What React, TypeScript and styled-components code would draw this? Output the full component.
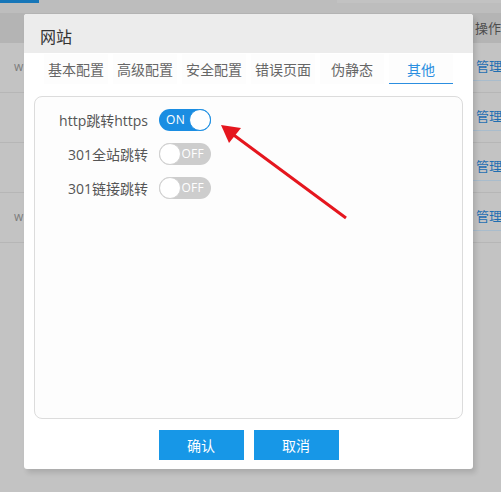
import React, { useState } from 'react'
import styled, { createGlobalStyle } from 'styled-components'

const GlobalStyle = createGlobalStyle`
  html, body {
    margin: 0;
    padding: 0;
    background: #c3c3c3;
  }
  body {
    font-family: 'Open Sans', 'Noto Sans CJK SC', sans-serif;
  }
`

const Screen = styled.div`
  position: relative;
  width: 501px;
  height: 492px;
  overflow: hidden;
  background: #c3c3c3;
  font-family: 'Open Sans', 'Noto Sans CJK SC', sans-serif;
`

// --- page behind the mask ---
const TopStrip = styled.div`
  height: 13px;
  background: #bdbdbd;
  display: flex;
  align-items: flex-start;
`
const TopAccent = styled.div`
  width: 39px;
  height: 3px;
  background: #1676b8;
`
const TopRight = styled.div`
  margin-left: auto;
  width: 164px;
  height: 3px;
  background: #c2c2c2;
`
const TableHead = styled.div`
  height: 30px;
  background: #b4b4b4;
  display: flex;
  align-items: center;
  justify-content: flex-end;
  color: #4d4d4d;
  font-size: 13px;
`
const HeadCell = styled.div`
  width: 26px;
  overflow: hidden;
  white-space: nowrap;
  margin-top: -2px;
`
const TableRow = styled.div`
  height: 49px;
  border-bottom: 1px solid #b6b6b6;
  display: flex;
  align-items: center;
  justify-content: space-between;
`
const RowText = styled.span`
  margin-left: 14px;
  color: #7d7d7d;
  font-size: 12px;
  margin-top: -2px;
`
const ManageCell = styled.div`
  align-self: flex-start;
  width: 28px;
  height: 38px;
  display: flex;
  align-items: center;
  box-sizing: border-box;
  padding: 8px 0 0 3px;
  border-bottom: 1px solid #a9bccc;
  color: #1f6fb2;
  font-size: 13px;
  white-space: nowrap;
  overflow: hidden;
`

// --- dialog ---
const Dialog = styled.div`
  position: absolute;
  left: 24px;
  top: 14px;
  width: 449px;
  height: 455px;
  background: #fff;
  border-radius: 3px;
  box-shadow: 3px 4px 5px rgba(0, 0, 0, 0.12);
  display: flex;
  flex-direction: column;
  box-sizing: border-box;
`
const DialogHeader = styled.div`
  height: 39px;
  flex-shrink: 0;
  background: #ececec;
  border-radius: 3px 3px 0 0;
  display: flex;
  align-items: center;
  box-sizing: border-box;
  padding: 4px 0 0 16px;
  font-size: 16px;
  color: #333;
`
const TabBar = styled.div`
  display: flex;
  gap: 5px;
  padding: 1px 0 0 20px;
  height: 31px;
  flex-shrink: 0;
`
const Tab = styled.div<{ $active?: boolean }>`
  width: 64px;
  height: 29px;
  display: flex;
  align-items: center;
  justify-content: center;
  font-size: 14px;
  background: #fdfdfd;
  color: ${({ $active }) => ($active ? '#2b8ee0' : '#666')};
  border-bottom: 1px solid ${({ $active }) => ($active ? '#2b8ee0' : 'transparent')};
  cursor: pointer;
`
const Panel = styled.div`
  margin: 11px 10px 0 10px;
  height: 323px;
  box-sizing: border-box;
  border: 1px solid #dcdcdc;
  border-radius: 8px;
  background: #fdfdfd;
  padding-top: 6px;
  display: flex;
  flex-direction: column;
`
const FormRow = styled.div`
  height: 34px;
  display: flex;
  align-items: center;
  gap: 11px;
`
const Label = styled.div`
  width: 113px;
  text-align: right;
  font-size: 14px;
  color: #555;
  white-space: nowrap;
`
const Switch = styled.div<{ $on: boolean }>`
  position: relative;
  width: 52px;
  height: 22px;
  border-radius: 11px;
  background: ${({ $on }) => ($on ? '#1a8de2' : '#cdcdcd')};
  box-sizing: border-box;
  cursor: pointer;
  display: flex;
  align-items: center;
  justify-content: ${({ $on }) => ($on ? 'flex-start' : 'flex-end')};
  padding: ${({ $on }) => ($on ? '0 0 0 7px' : '0 7px 0 0')};
`
const SwitchText = styled.span`
  color: #fff;
  font-size: 12px;
  letter-spacing: 0.3px;
  line-height: 1;
`
const Knob = styled.span<{ $on: boolean }>`
  position: absolute;
  top: 0;
  ${({ $on }) => ($on ? 'right: 0;' : 'left: 0;')}
  width: 22px;
  height: 22px;
  border-radius: 50%;
  background: #fff;
  box-sizing: border-box;
  border: 1px solid ${({ $on }) => ($on ? '#1a8de2' : '#d0d0d0')};
`
const Footer = styled.div`
  display: flex;
  justify-content: center;
  gap: 10px;
  margin-top: 11px;
`
const Button = styled.button`
  width: 85px;
  height: 30px;
  border: none;
  border-radius: 0;
  background: #1797e7;
  color: #fff;
  font-family: 'Open Sans', 'Noto Sans CJK SC', sans-serif;
  font-size: 14px;
  cursor: pointer;
  padding: 0;
`
const ArrowLayer = styled.svg`
  position: absolute;
  left: 0;
  top: 0;
  pointer-events: none;
`

const tabs = ['基本配置', '高级配置', '安全配置', '错误页面', '伪静态', '其他']

function Toggle({ on, onClick }: { on: boolean; onClick: () => void }) {
  return (
    <Switch $on={on} onClick={onClick}>
      <SwitchText>{on ? 'ON' : 'OFF'}</SwitchText>
      <Knob $on={on} />
    </Switch>
  )
}

export default function App() {
  const [active, setActive] = useState(5)
  const [opts, setOpts] = useState([true, false, false])
  const labels = ['http跳转https', '301全站跳转', '301链接跳转']

  const flip = (i: number) => setOpts(opts.map((v, j) => (j === i ? !v : v)))

  return (
    <Screen>
      <GlobalStyle />
      <TopStrip>
        <TopAccent />
        <TopRight />
      </TopStrip>
      <TableHead>
        <HeadCell>操作</HeadCell>
      </TableHead>
      {[0, 1, 2, 3].map((i) => (
        <TableRow key={i}>
          <RowText>{i === 0 || i === 3 ? 'w' : ''}</RowText>
          <ManageCell>管理</ManageCell>
        </TableRow>
      ))}

      <Dialog>
        <DialogHeader>网站</DialogHeader>
        <TabBar>
          {tabs.map((name, i) => (
            <Tab key={name} $active={i === active} onClick={() => setActive(i)}>
              {name}
            </Tab>
          ))}
        </TabBar>
        <Panel>
          {labels.map((l, i) => (
            <FormRow key={l}>
              <Label>{l}</Label>
              <Toggle on={opts[i]} onClick={() => flip(i)} />
            </FormRow>
          ))}
        </Panel>
        <Footer>
          <Button>确认</Button>
          <Button>取消</Button>
        </Footer>
      </Dialog>

      <ArrowLayer width="501" height="492" viewBox="0 0 501 492">
        <line x1="346" y1="218" x2="231" y2="133" stroke="#e5161e" strokeWidth="3" />
        <polygon points="221,125 241,128 229,143" fill="#e5161e" />
      </ArrowLayer>
    </Screen>
  )
}
